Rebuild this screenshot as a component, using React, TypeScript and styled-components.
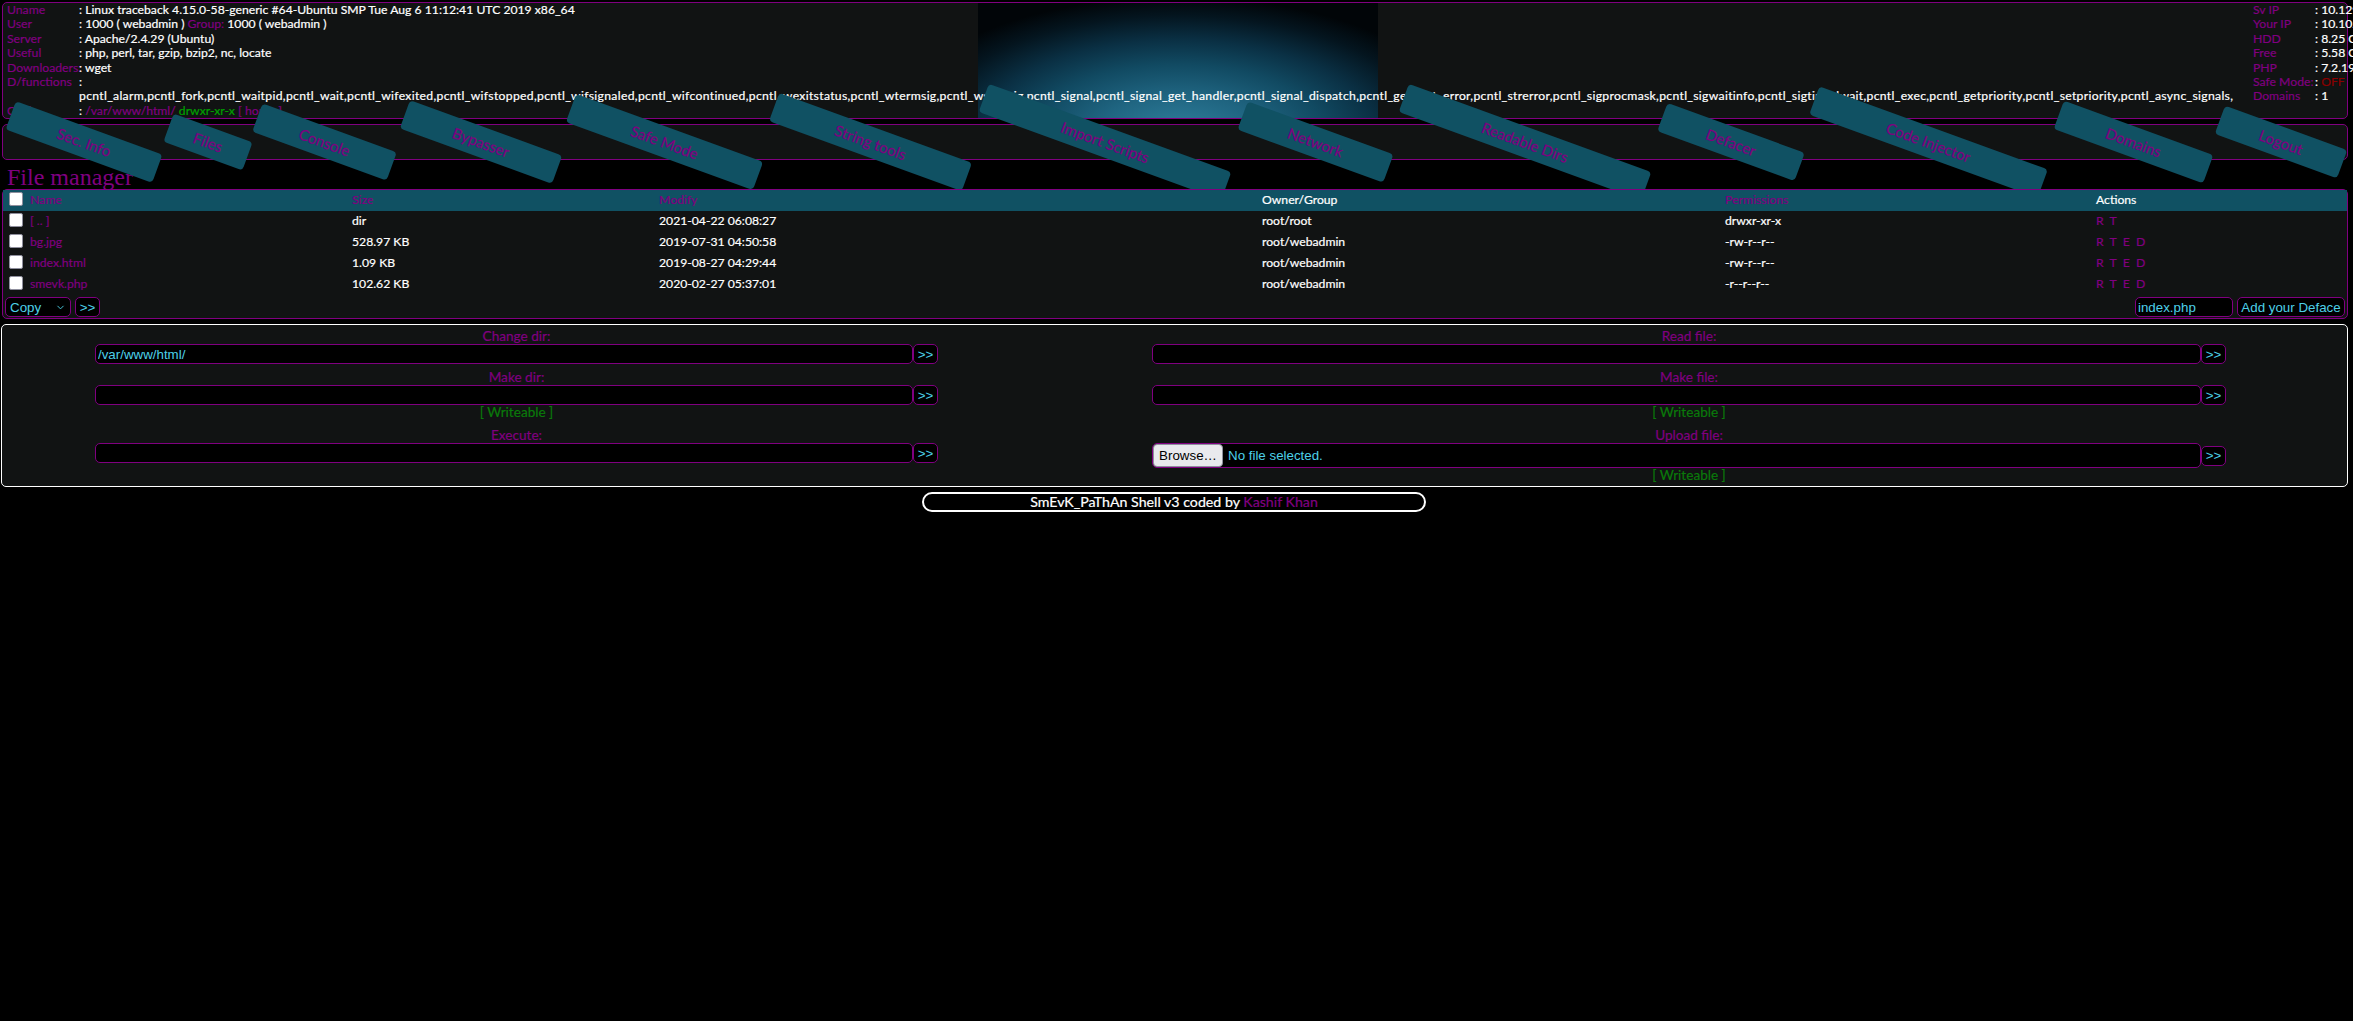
import React from "react";
import styled, { createGlobalStyle } from "styled-components";
import { ChevronDown } from "lucide-react";

const PURPLE = "#800080";
const CYAN = "#4dd0e8";
const PANEL = "#111313";
const TAB = "#105163";
const SANS = `"Lato", "Liberation Sans", sans-serif`;
const FORM = `"Liberation Sans", Arial, sans-serif`;

const Global = createGlobalStyle`
  html, body { background: #000; overflow: hidden; height: 100%; }
  body {
    margin: 0;
    padding: 2px 5px 0 2px;
    box-sizing: border-box;
    color: #fff;
    font: 12.2px/14.4px ${SANS};
    -webkit-text-stroke: 0.2px currentColor;
  }
  * { box-sizing: border-box; }
`;

const Header = styled.header`
  display: flex;
  height: 117px;
  border: 1px solid ${PURPLE};
  border-radius: 5px;
  padding-left: 4px;
  background-color: ${PANEL};
  background-image: radial-gradient(ellipse 290px 135px at 50% 112%, #2f7f9c 0%, #1f6480 28%, #114a62 50%, #0a3044 68%, #04151f 86%, #010508 100%);
  background-repeat: no-repeat;
  background-size: 400px 115px;
  background-position: 975px 0;
`;
const InfoLeft = styled.div`
  flex: 0 0 2246px;
  display: grid;
  grid-template-columns: 72px 1fr;
  grid-auto-rows: 14.4px;
`;
const InfoRight = styled.div`
  flex: 0 0 auto;
  display: grid;
  grid-template-columns: 62px 160px;
  grid-auto-rows: 14.4px;
  white-space: nowrap;
`;
const Key = styled.span`color: ${PURPLE}; white-space: nowrap;`;
const Val = styled.span`white-space: nowrap;`;
const FuncList = styled(Val)`letter-spacing: 0.31px;`;
const Accent = styled.span<{ $c?: string }>`color: ${(p) => p.$c || PURPLE};`;
const Spacer = styled.span``;

const Nav = styled.nav`
  display: flex;
  gap: 3.5px;
  height: 36px;
  margin-top: 5px;
  padding: 2px 3px;
  border: 1px solid ${PURPLE};
  border-radius: 5px;
  background: ${PANEL};
`;
const Tab = styled.a<{ $w: number }>`
  flex: 0 0 ${(p) => p.$w}px;
  height: 30px;
  display: flex;
  align-items: center;
  justify-content: center;
  background: ${TAB};
  color: ${PURPLE};
  font-size: 15px;
  border-radius: 4px;
  transform: rotate(20deg);
`;

const Title = styled.h2`
  margin: 0;
  height: 29px;
  padding: 5px 0 0 5px;
  font: 400 24px/24px "Liberation Serif", serif;
  -webkit-text-stroke: 0;
  color: ${PURPLE};
`;

const Table = styled.section`
  position: relative;
  height: 130px;
  border: 1px solid ${PURPLE};
  border-radius: 5px;
  background: ${PANEL};
`;
const Row = styled.div<{ $head?: boolean }>`
  display: grid;
  grid-template-columns: 349px 307px 603px 463px 371px 1fr;
  height: 21px;
  align-items: center;
  background: ${(p) => (p.$head ? TAB : "transparent")};
`;
const NameCell = styled.div`
  display: flex;
  align-items: center;
  gap: 7px;
  padding-left: 6px;
`;
const Check = styled.input.attrs({ type: "checkbox" })`
  width: 14px;
  height: 14px;
  margin: -3px 0 0;
  appearance: none;
  background: #fff;
  border: 1px solid #8f8f9d;
  border-radius: 2px;
`;
const Cell = styled.div<{ $purple?: boolean }>`
  color: ${(p) => (p.$purple ? PURPLE : "#fff")};
`;
const Actions = styled(Cell)`letter-spacing: 1.6px;`;
const TableFoot = styled.div`
  display: flex;
  align-items: center;
  justify-content: space-between;
  height: 24px;
  padding: 0 2px;
`;
const Group = styled.div`
  display: flex;
  align-items: center;
  gap: 4px;
`;
const SelectWrap = styled.div`
  position: relative;
  width: 66px;
  height: 20px;
  color: ${CYAN};
  svg { position: absolute; right: 5px; top: 5px; pointer-events: none; }
`;
const Select = styled.select`
  width: 100%;
  height: 100%;
  appearance: none;
  background: #000;
  color: ${CYAN};
  border: 1px solid ${PURPLE};
  border-radius: 5px;
  padding: 0 4px;
  font: 13.33px ${FORM};
  -webkit-text-stroke: 0;
`;
const Go = styled.button`
  height: 20px;
  width: 25px;
  padding: 0;
  background: #000;
  color: ${CYAN};
  border: 1px solid ${PURPLE};
  border-radius: 5px;
  font: 13.33px ${FORM};
  -webkit-text-stroke: 0;
`;
const Wide = styled(Go)`width: 108px;`;
const Field = styled.input<{ $w?: number }>`
  height: 20px;
  width: ${(p) => (p.$w ? `${p.$w}px` : "100%")};
  flex: ${(p) => (p.$w ? "0 0 auto" : "1 1 0")};
  min-width: 0;
  background: #000;
  color: ${CYAN};
  border: 1px solid ${PURPLE};
  border-radius: 5px;
  padding: 0 2px;
  font: 13.33px ${FORM};
  -webkit-text-stroke: 0;
  outline: none;
`;

const Tools = styled.section`
  display: grid;
  grid-template-columns: 1029px 1fr;
  height: 163px;
  margin-top: 5px;
  margin-left: -1px;
  padding-top: 4px;
  border: 1px solid #fff;
  border-radius: 5px;
  background: ${PANEL};
`;
const ToolCol = styled.div`
  display: flex;
  flex-direction: column;
  align-items: center;
  font-size: 13.6px;
`;
const ToolLabel = styled.div<{ $gap?: number }>`
  height: 15px;
  line-height: 15px;
  margin-top: ${(p) => p.$gap || 0}px;
  color: ${PURPLE};
`;
const Writable = styled.div`
  height: 15px;
  line-height: 15px;
  color: #0a7a0a;
`;
const ToolRow = styled.div<{ $w: number }>`
  display: flex;
  align-items: center;
  width: ${(p) => p.$w}px;
`;
const FileBox = styled.div`
  flex: 1 1 0;
  height: 25px;
  display: flex;
  align-items: center;
  background: #000;
  border: 1px solid ${PURPLE};
  border-radius: 5px;
  color: ${CYAN};
  font: 13.33px ${FORM};
  -webkit-text-stroke: 0;
`;
const Browse = styled.button`
  width: 70px;
  height: 23px;
  margin-right: 5px;
  padding: 0;
  background: #e9e9ed;
  color: #000;
  border: 1px solid #8f8f9d;
  border-radius: 4px;
  font: 13.33px ${FORM};
  -webkit-text-stroke: 0;
`;

const Footer = styled.footer`
  width: 504px;
  height: 20px;
  margin: 5px auto 0;
  border: 2px solid #fff;
  border-radius: 10px;
  text-align: center;
  font-size: 14.2px;
  line-height: 16px;
  position: relative;
  left: -1px;
`;

const tabs: [string, number][] = [
  ["Sec. Info", 156], ["Files", 84], ["Console", 143], ["Bypasser", 162], ["Safe Mode", 199],
  ["String tools", 205], ["Import Scripts", 258], ["Network", 155], ["Readable Dirs", 258],
  ["Defacer", 146], ["Code Injector", 243], ["Domains", 159], ["Logout", 130],
];

const files = [
  { name: "[ .. ]", size: "dir", date: "2021-04-22 06:08:27", owner: "root/root", perm: "drwxr-xr-x", act: "R T" },
  { name: "bg.jpg", size: "528.97 KB", date: "2019-07-31 04:50:58", owner: "root/webadmin", perm: "-rw-r--r--", act: "R T E D" },
  { name: "index.html", size: "1.09 KB", date: "2019-08-27 04:29:44", owner: "root/webadmin", perm: "-rw-r--r--", act: "R T E D" },
  { name: "smevk.php", size: "102.62 KB", date: "2020-02-27 05:37:01", owner: "root/webadmin", perm: "-r--r--r--", act: "R T E D" },
];

const funcs = "pcntl_alarm,pcntl_fork,pcntl_waitpid,pcntl_wait,pcntl_wifexited,pcntl_wifstopped,pcntl_wifsignaled,pcntl_wifcontinued,pcntl_wexitstatus,pcntl_wtermsig,pcntl_wstopsig,pcntl_signal,pcntl_signal_get_handler,pcntl_signal_dispatch,pcntl_get_last_error,pcntl_strerror,pcntl_sigprocmask,pcntl_sigwaitinfo,pcntl_sigtimedwait,pcntl_exec,pcntl_getpriority,pcntl_setpriority,pcntl_async_signals,";

export default function App() {
  return (
    <>
      <Global />
      <Header>
        <InfoLeft>
          <Key>Uname</Key><Val>: Linux traceback 4.15.0-58-generic #64-Ubuntu SMP Tue Aug 6 11:12:41 UTC 2019 x86_64</Val>
          <Key>User</Key><Val>: 1000 ( webadmin ) <Accent>Group:</Accent> 1000 ( webadmin )</Val>
          <Key>Server</Key><Val>: Apache/2.4.29 (Ubuntu)</Val>
          <Key>Useful</Key><Val>: php, perl, tar, gzip, bzip2, nc, locate</Val>
          <Key>Downloaders:</Key><Val>: wget</Val>
          <Key>D/functions</Key><Val>:</Val>
          <Spacer /><FuncList>{funcs}</FuncList>
          <Key>Cwd</Key><Val>: <Accent>/var/www/html/</Accent> <Accent $c="#00a000">drwxr-xr-x</Accent> <Accent>[ home ]</Accent></Val>
        </InfoLeft>
        <InfoRight>
          <Key>Sv IP</Key><Val>: 10.129.1.189</Val>
          <Key>Your IP</Key><Val>: 10.10.14.3</Val>
          <Key>HDD</Key><Val>: 8.25 GB</Val>
          <Key>Free</Key><Val>: 5.58 GB</Val>
          <Key>PHP</Key><Val>: 7.2.19-0ubuntu</Val>
          <Key>Safe Mode:</Key><Val>: <Accent $c="#8b0000">OFF</Accent></Val>
          <Key>Domains</Key><Val>: 1</Val>
        </InfoRight>
      </Header>

      <Nav>
        {tabs.map(([label, w]) => (
          <Tab key={label} $w={w}>{label}</Tab>
        ))}
      </Nav>

      <Title>File manager</Title>

      <Table>
        <Row $head>
          <NameCell><Check /><Cell $purple>Name</Cell></NameCell>
          <Cell $purple>Size</Cell>
          <Cell $purple>Modify</Cell>
          <Cell>Owner/Group</Cell>
          <Cell $purple>Permissions</Cell>
          <Cell>Actions</Cell>
        </Row>
        {files.map((f) => (
          <Row key={f.name}>
            <NameCell><Check /><Cell $purple>{f.name}</Cell></NameCell>
            <Cell>{f.size}</Cell>
            <Cell>{f.date}</Cell>
            <Cell>{f.owner}</Cell>
            <Cell>{f.perm}</Cell>
            <Actions $purple>{f.act}</Actions>
          </Row>
        ))}
        <TableFoot>
          <Group>
            <SelectWrap>
              <Select defaultValue="Copy"><option>Copy</option><option>Move</option><option>Delete</option></Select>
              <ChevronDown size={11} />
            </SelectWrap>
            <Go>&gt;&gt;</Go>
          </Group>
          <Group>
            <Field $w={98} defaultValue="index.php" />
            <Wide>Add your Deface</Wide>
          </Group>
        </TableFoot>
      </Table>

      <Tools>
        <ToolCol>
          <ToolLabel>Change dir:</ToolLabel>
          <ToolRow $w={843}><Field defaultValue="/var/www/html/" /><Go>&gt;&gt;</Go></ToolRow>
          <ToolLabel $gap={6}>Make dir:</ToolLabel>
          <ToolRow $w={843}><Field /><Go>&gt;&gt;</Go></ToolRow>
          <Writable>[ Writeable ]</Writable>
          <ToolLabel $gap={8}>Execute:</ToolLabel>
          <ToolRow $w={843}><Field /><Go>&gt;&gt;</Go></ToolRow>
        </ToolCol>
        <ToolCol>
          <ToolLabel>Read file:</ToolLabel>
          <ToolRow $w={1074}><Field /><Go>&gt;&gt;</Go></ToolRow>
          <ToolLabel $gap={6}>Make file:</ToolLabel>
          <ToolRow $w={1074}><Field /><Go>&gt;&gt;</Go></ToolRow>
          <Writable>[ Writeable ]</Writable>
          <ToolLabel $gap={8}>Upload file:</ToolLabel>
          <ToolRow $w={1074}>
            <FileBox><Browse>Browse…</Browse>No file selected.</FileBox>
            <Go>&gt;&gt;</Go>
          </ToolRow>
          <Writable>[ Writeable ]</Writable>
        </ToolCol>
      </Tools>

      <Footer>SmEvK_PaThAn Shell v3 coded by <Accent>Kashif Khan</Accent></Footer>
    </>
  );
}
